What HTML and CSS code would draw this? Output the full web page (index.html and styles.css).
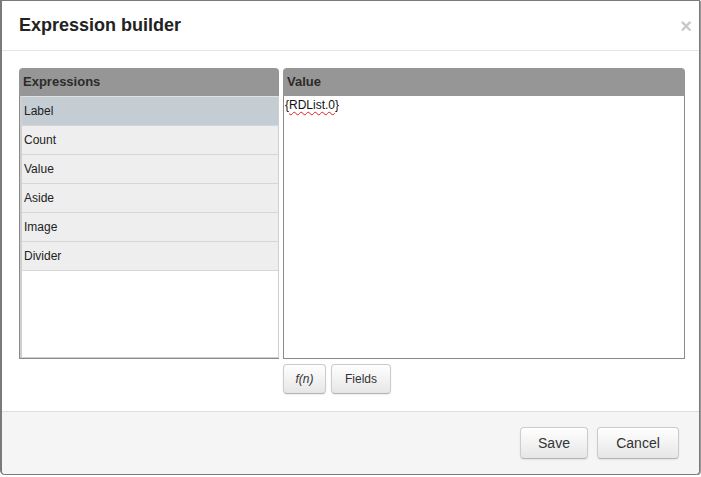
FILE: index.html
```html
<!DOCTYPE html>
<html>
<head>
<meta charset="utf-8">
<link rel="stylesheet" href="styles.css">
</head>
<body>
<div class="modal">
  <div class="modal-header">
    <h3 class="title">Expression builder</h3>
    <span class="close">×</span>
  </div>
  <div class="modal-body">
    <div class="cols">
      <div class="panel panel-left">
        <div class="panel-head">Expressions</div>
        <div class="list-wrap">
          <ul class="list">
            <li class="row selected">Label</li>
            <li class="row">Count</li>
            <li class="row">Value</li>
            <li class="row">Aside</li>
            <li class="row">Image</li>
            <li class="row">Divider</li>
          </ul>
        </div>
      </div>
      <div class="right-col">
        <div class="panel panel-right">
          <div class="panel-head">Value</div>
          <div class="value-box">{<span class="spell">RDList.0</span>}</div>
        </div>
        <div class="tools">
          <button class="btn btn-small btn-fn"><i>f(n)</i></button>
          <button class="btn btn-small btn-fields">Fields</button>
        </div>
      </div>
    </div>
  </div>
  <div class="modal-footer">
    <button class="btn btn-foot btn-save">Save</button>
    <button class="btn btn-foot btn-cancel">Cancel</button>
  </div>
</div>
</body>
</html>
```
FILE: styles.css
```css
html, body {
  margin: 0;
  padding: 0;
  background: #ffffff;
}
body {
  font-family: "Liberation Sans", Arial, Helvetica, sans-serif;
  color: #333333;
  font-size: 12px;
}
.modal {
  width: 700px;
  box-sizing: border-box;
  border: 1px solid #7a7a7a;
  border-left-width: 2px;
  border-radius: 0 0 5px 5px;
  box-shadow: 1px 1px 1px rgba(0,0,0,0.45);
  background: #ffffff;
  overflow: hidden;
}
.modal-header {
  display: flex;
  justify-content: space-between;
  align-items: flex-start;
  padding: 14px 7px 14px 17px;
  border-bottom: 1px solid #e5e5e5;
}
.title {
  margin: 0;
  font-size: 18px;
  line-height: 20px;
  font-weight: bold;
  color: #222222;
}
.close {
  font-size: 20px;
  font-weight: bold;
  line-height: 20px;
  color: #c9c9c9;
  margin-top: 1px;
}
.modal-body {
  padding: 17px 14px 17px 17px;
}
.cols {
  display: grid;
  grid-template-columns: 260px 402px;
  column-gap: 4px;
  align-items: start;
}
.panel-head {
  height: 28px;
  line-height: 28px;
  background: #969696;
  border-radius: 4px 4px 0 0;
  padding-left: 4px;
  font-size: 13px;
  font-weight: bold;
  color: #2b2b2b;
}
.list-wrap {
  height: 262px;
  border-left: 1px solid #8a8a8a;
  border-bottom: 1px solid #8a8a8a;
}
.list {
  list-style: none;
  margin: 0;
  padding: 0;
  height: 100%;
  box-sizing: border-box;
  border: 1px solid #cfcfcf;
  border-top: 1px solid #e0e0e0;
  border-left-width: 2px;
}
.row {
  height: 28px;
  line-height: 28px;
  border-bottom: 1px solid #d6d6d6;
  background: #eeeeee;
  padding-left: 2px;
  font-size: 12px;
  color: #222222;
}
.row.selected {
  background: #c4cdd4;
}
.value-box {
  height: 263px;
  box-sizing: border-box;
  border: 1px solid #8a8a8a;
  border-top: none;
  padding: 2px 1px;
  font-size: 12px;
  line-height: 14px;
  color: #111111;
}
.spell {
  text-decoration: underline wavy #e02020;
  text-decoration-thickness: 1px;
  text-underline-offset: 2px;
}
.tools {
  display: flex;
  gap: 5px;
  margin-top: 5px;
}
.btn {
  font-family: "Liberation Sans", Arial, Helvetica, sans-serif;
  color: #333333;
  background: linear-gradient(#ffffff, #e6e6e6);
  border: 1px solid #cccccc;
  border-bottom-color: #b3b3b3;
  border-radius: 4px;
  box-shadow: inset 0 1px 0 rgba(255,255,255,0.2), 0 1px 2px rgba(0,0,0,0.08);
  cursor: pointer;
  margin: 0;
  padding: 0;
}
.btn-small {
  height: 30px;
  font-size: 12px;
}
.btn-fn {
  width: 43px;
}
.btn-fields {
  width: 60px;
}
.btn-small i {
  font-style: italic;
}
.modal-footer {
  display: flex;
  justify-content: flex-end;
  gap: 9px;
  padding: 15px 20px 15px 0;
  background: #f5f5f5;
  border-top: 1px solid #dddddd;
}
.btn-foot {
  height: 32px;
  font-size: 14px;
}
.btn-save {
  width: 68px;
}
.btn-cancel {
  width: 82px;
}
```
